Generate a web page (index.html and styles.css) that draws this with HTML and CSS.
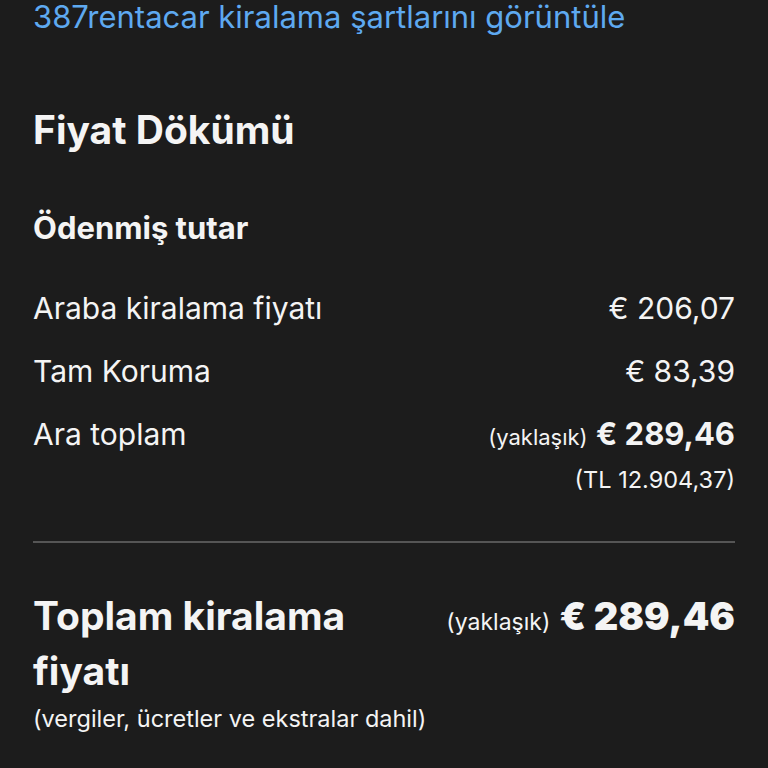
FILE: index.html
```html
<!DOCTYPE html>
<html>
<meta name="viewport" content="width=device-width, initial-scale=1.0">

<head>
    <link rel="stylesheet" href="styles.css">
</head>

<body>
    <a class="terms-link" href="#">387rentacar kiralama şartlarını görüntüle</a>

    <h1 class="title">Fiyat Dökümü</h1>

    <h2 class="subtitle">Ödenmiş tutar</h2>

    <div class="row">
        <span class="label">Araba kiralama fiyatı</span>
        <span class="price">€ 206,07</span>
    </div>
    <div class="row">
        <span class="label">Tam Koruma</span>
        <span class="price">€ 83,39</span>
    </div>
    <div class="row">
        <span class="label">Ara toplam</span>
        <span class="price"><span class="approx">(yaklaşık)</span> <b>€ 289,46</b></span>
    </div>
    <div class="local-price">(TL 12.904,37)</div>

    <hr class="divider">

    <div class="total">
        <span class="total-label">Toplam kiralama fiyatı</span>
        <span class="total-price"><span class="approx">(yaklaşık)</span> <b>€ 289,46</b></span>
    </div>
    <div class="note">(vergiler, ücretler ve ekstralar dahil)</div>
</body>

</html>
```

FILE: styles.css
```css
body {
    margin: 0;
    padding: 0 33px;
    background-color: #1c1c1c;
    color: #f4f4f4;
    font-family: Inter, "Noto Sans", sans-serif;
}

.terms-link {
    display: block;
    font-size: 31px;
    line-height: 34px;
    color: #5ea9f0;
    text-decoration: none;
}

.title {
    margin: 72px 0 0;
    font-size: 39px;
    line-height: 48px;
    font-weight: 700;
}

.subtitle {
    margin: 56px 0 0;
    font-size: 31px;
    line-height: 36px;
    font-weight: 700;
}

.row {
    display: flex;
    justify-content: space-between;
    align-items: baseline;
    margin-top: 23px;
    font-size: 30px;
    line-height: 40px;
}

.subtitle + .row {
    margin-top: 42px;
}

.approx {
    font-size: 22px;
    font-weight: 400;
}

.price b {
    font-size: 31px;
    font-weight: 700;
}

.local-price {
    margin-top: 9px;
    text-align: right;
    font-size: 23.5px;
    line-height: 28px;
}

.divider {
    margin: 47px 0 0;
    border: none;
    height: 2px;
    background-color: #555;
}

.total {
    display: flex;
    justify-content: space-between;
    align-items: baseline;
    margin-top: 45px;
    font-size: 39px;
    line-height: 55px;
    font-weight: 700;
}

.total-label {
    max-width: 360px;
}

.total-price b {
    font-size: 38px;
}

.total-price .approx {
    font-size: 23px;
}

.note {
    margin-top: 7px;
    font-size: 23.5px;
    line-height: 28px;
}
```
